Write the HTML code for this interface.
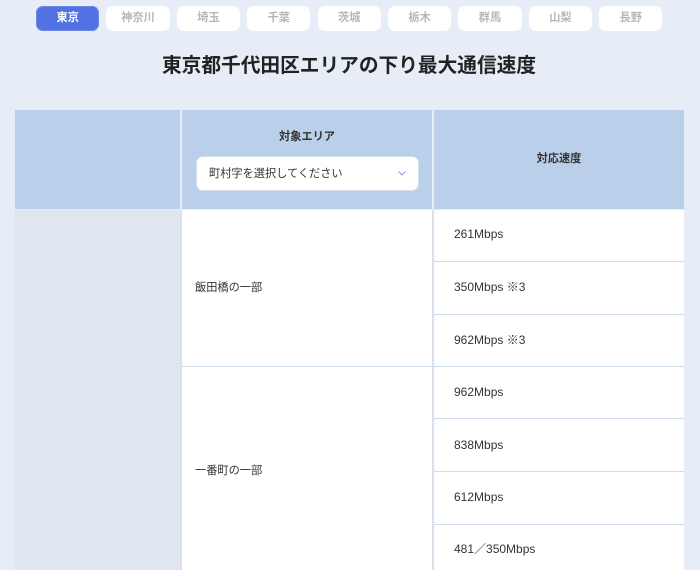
<!DOCTYPE html>
<html lang="ja">
<head>
<meta charset="utf-8">
<style>
html,body{margin:0;padding:0}
body{width:700px;height:570px;overflow:hidden;background:#e6edf6;position:relative;font-family:"Liberation Sans","Noto Sans CJK JP",sans-serif;color:#333}
.a{position:absolute}
.tab{position:absolute;top:6px;width:63.4px;height:25px;background:#fff;border-radius:7px;text-align:center;font-size:11.2px;font-weight:700;line-height:25px;color:#b4b8bd}
.tab.on{background:#5272e3;color:#fff;box-shadow:0 0 0 1px #6d88e8 inset}
h1{position:absolute;left:0;top:52px;width:698px;margin:0;text-align:center;font-size:19.7px;line-height:28px;font-weight:700;color:#222}
.t{position:absolute;font-size:12px;line-height:18px;color:#333;white-space:nowrap}
.j{font-size:11.2px}
.th{font-weight:700;font-size:11.2px;color:#333;text-align:center}
.l{position:absolute;left:434px;width:250px;height:1px;background:#cfdcea}
</style>
</head>
<body>
<div class="tab on" style="left:36px">東京</div>
<div class="tab" style="left:106.4px">神奈川</div>
<div class="tab" style="left:176.8px">埼玉</div>
<div class="tab" style="left:247.1px">千葉</div>
<div class="tab" style="left:317.5px">茨城</div>
<div class="tab" style="left:387.9px">栃木</div>
<div class="tab" style="left:458.3px">群馬</div>
<div class="tab" style="left:528.7px">山梨</div>
<div class="tab" style="left:599px">長野</div>

<h1>東京都千代田区エリアの下り最大通信速度</h1>

<div class="a" style="left:15px;top:110px;width:165px;height:99px;background:#bad0ea"></div>
<div class="a" style="left:182px;top:110px;width:250px;height:99px;background:#bad0ea"></div>
<div class="a" style="left:434px;top:110px;width:250px;height:99px;background:#bad0ea"></div>

<div class="a" style="left:15px;top:210px;width:165px;height:360px;background:#dfe6f0"></div>
<div class="a" style="left:180px;top:210px;width:254px;height:360px;background:#d8e2ef"></div>
<div class="a" style="left:182px;top:210px;width:250px;height:360px;background:#fff"></div>
<div class="a" style="left:434px;top:210px;width:250px;height:360px;background:#fff"></div>

<div class="a" style="left:182px;top:366px;width:250px;height:1px;background:#cfdcea"></div>
<div class="l" style="top:261px"></div>
<div class="l" style="top:314px"></div>
<div class="l" style="top:366px"></div>
<div class="l" style="top:418px"></div>
<div class="l" style="top:471px"></div>
<div class="l" style="top:524px"></div>

<div class="t th" style="left:182px;top:128px;width:250px">対象エリア</div>
<div class="t th" style="left:434px;top:150px;width:250px">対応速度</div>

<div class="a" style="left:196px;top:155.5px;width:220.5px;height:33px;background:#fff;border:1px solid #d5dfec;border-radius:7px"></div>
<div class="t j" style="left:209px;top:165px">町村字を選択してください</div>
<svg class="a" style="left:398px;top:170px" width="8" height="6" viewBox="0 0 8 6"><path d="M.7 1.6L4 5L7.3 1.6" fill="none" stroke="#7b93dc" stroke-width=".9"/></svg>

<div class="t j" style="left:195px;top:279px">飯田橋の一部</div>
<div class="t j" style="left:195px;top:462px">一番町の一部</div>

<div class="t" style="left:454px;top:225px">261Mbps</div>
<div class="t" style="left:454px;top:278px">350Mbps ※3</div>
<div class="t" style="left:454px;top:331px">962Mbps ※3</div>
<div class="t" style="left:454px;top:383px">962Mbps</div>
<div class="t" style="left:454px;top:436px">838Mbps</div>
<div class="t" style="left:454px;top:488px">612Mbps</div>
<div class="t" style="left:454px;top:540px">481／350Mbps</div>
</body>
</html>
